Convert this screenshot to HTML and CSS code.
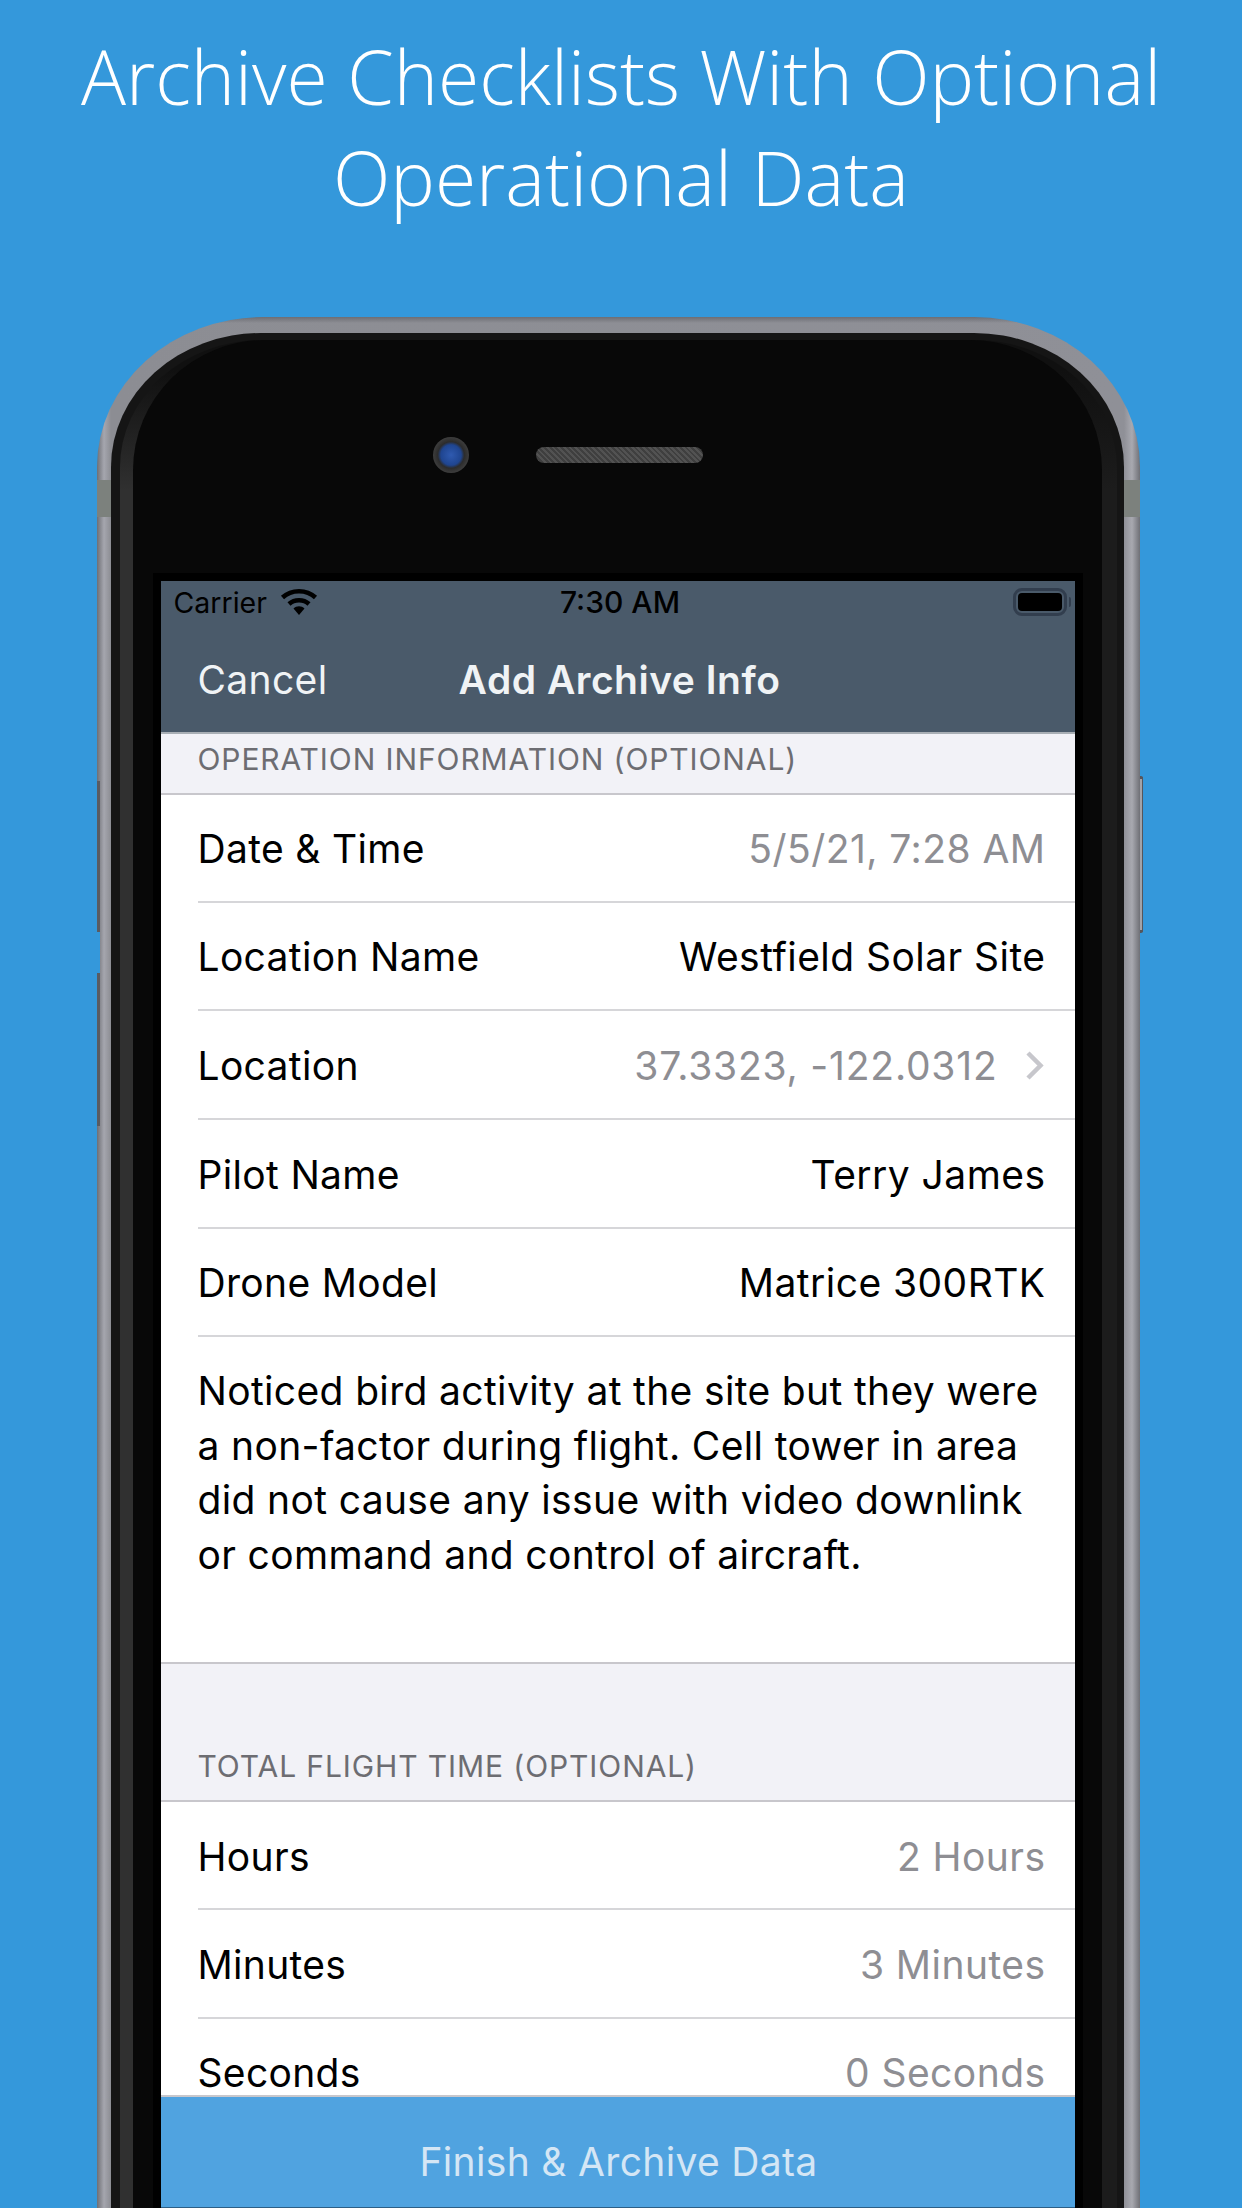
FILE: index.html
```html
<!DOCTYPE html>
<html lang="en">
<head>
  <meta charset="UTF-8">
  <title>Archive Checklists</title>
  <link rel="stylesheet" href="styles.css">
</head>
<body>
  <h1 class="headline">Archive Checklists With Optional<br>Operational Data</h1>

  <div class="phone">
    <span class="vol vol-up"></span>
    <span class="vol vol-down"></span>
    <span class="notch"></span>
    <span class="power-btn"></span>
    <span class="antenna antenna-left"></span>
    <span class="antenna antenna-right"></span>
    <div class="rim">
      <div class="band">
        <div class="face">
          <div class="sensors">
            <span class="camera"></span>
            <span class="speaker"></span>
          </div>
          <div class="screen">
            <div class="topbar">
              <div class="status">
                <div class="status-left">
                  <span>Carrier</span>
                  <svg class="wifi" viewBox="0 0 38 28" width="38" height="28">
                    <path d="M2.5 9.5C11.5 1 26.500 1 35.500 9.500" fill="none" stroke="#000" stroke-width="4.500"/>
                    <path d="M9 16C14.500 11 23.500 11 29 16" fill="none" stroke="#000" stroke-width="4.500"/>
                    <path d="M13.500 20.500C16.500 17.500 21.500 17.500 24.500 20.500L19 27Z" fill="#000"/>
                  </svg>
                </div>
                <span class="status-time">7:30 AM</span>
                <div class="battery"><span class="battery-fill"></span></div>
              </div>
              <div class="nav">
                <span class="nav-cancel">Cancel</span>
                <span class="nav-title">Add Archive Info</span>
                <span></span>
              </div>
            </div>

            <div class="list">
              <div class="section-head">OPERATION INFORMATION (OPTIONAL)</div>
              <div class="group">
                <div class="row"><span>Date &amp; Time</span><span class="val muted">5/5/21, 7:28 AM</span></div>
                <div class="row"><span>Location Name</span><span class="val">Westfield Solar Site</span></div>
                <div class="row">
                  <span>Location</span>
                  <span class="val muted with-chevron">37.3323, -122.0312
                    <svg class="chevron" viewBox="0 0 19 31" width="19" height="31"><path d="M3 3L15.500 15.500L3 28" fill="none" stroke="#c7c7cc" stroke-width="4.500"/></svg>
                  </span>
                </div>
                <div class="row"><span>Pilot Name</span><span class="val">Terry James</span></div>
                <div class="row"><span>Drone Model</span><span class="val">Matrice 300RTK</span></div>
                <p class="notes">Noticed bird activity at the site but they were<br>a non-factor during flight. Cell tower in area<br>did not cause any issue with video downlink<br>or command and control of aircraft.</p>
              </div>

              <div class="section-head section-tall">TOTAL FLIGHT TIME (OPTIONAL)</div>
              <div class="group">
                <div class="row"><span>Hours</span><span class="val muted">2 Hours</span></div>
                <div class="row"><span>Minutes</span><span class="val muted">3 Minutes</span></div>
                <div class="row"><span>Seconds</span><span class="val muted">0 Seconds</span></div>
              </div>
            </div>

            <div class="finish">Finish &amp; Archive Data</div>
          </div>
        </div>
      </div>
    </div>
  </div>
</body>
</html>
```

FILE: styles.css
```css
html,body{
  width: 1242px;
  height: 2208px;
  margin: 0;
  padding: 0;
  overflow: hidden;
}
body{
  background: #3498db;
  display: flex;
  flex-direction: column;
  font-family: Inter, "Liberation Sans", sans-serif;
}
.headline{
  margin: 0;
  height: 317px;
  flex-shrink: 0;
  padding-top: 26px;
  box-sizing: border-box;
  text-align: center;
  color: #fff;
  font-family: "Open Sans", sans-serif;
  font-weight: 340;
  font-size: 75px;
  line-height: 101px;
}

/* phone body */
.phone{
  position: relative;
  flex: 1;
  min-height: 0;
  display: flex;
  width: 1043px;
  margin-left: 97px;
  box-sizing: border-box;
  padding: 16px 16px 0 14px;
  border-radius: 166px 166px 0 0 / 150px 150px 0 0;
  background:
    linear-gradient(180deg, #6d6e74 0, rgba(109,110,116,0) 6px),
    linear-gradient(90deg, #6e6f75 0, #a5a6ae 7px, #8c8d93 14px, #8f9097 calc(100% - 16px), #a8a9b0 calc(100% - 8px), #6f7076 100%);
}
.vol{
  position: absolute;
  left: 0;
  width: 3px;
  background: #5a5b61;
}
.vol-up{top: 464px; height: 151px;}
.vol-down{top: 656px; height: 153px;}
.notch{
  position: absolute;
  left: 0;
  top: 615px;
  width: 3px;
  height: 41px;
  background: #3498db;
}
.power-btn{
  position: absolute;
  right: -3px;
  top: 459px;
  width: 3px;
  height: 157px;
  box-sizing: border-box;
  background: #a2a3a9;
  border: solid #55565c;
  border-width: 3px 1px 3px 0;
  border-radius: 0 2px 2px 0;
}
.antenna{
  position: absolute;
  top: 163px;
  width: 14px;
  height: 37px;
  background: #7c817d;
}
.antenna-left{left: 0;}
.antenna-right{right: 0; width: 16px;}
.rim{
  flex: 1;
  min-height: 0;
  display: flex;
  padding: 7px 7px 0 9px;
  background: #151515;
  border-radius: 150px 150px 0 0 / 134px 134px 0 0;
}
.band{
  flex: 1;
  min-height: 0;
  display: flex;
  padding: 0 15px 0 13px;
  background:
    linear-gradient(180deg, #101010 0, #101010 30px, rgba(16,16,16,0) 150px),
    linear-gradient(90deg, #303030 0, #303030 30px, #1c1c1c calc(100% - 30px));
  border-radius: 142px 142px 0 0 / 127px 127px 0 0;
}
.face{
  flex: 1;
  min-height: 0;
  display: flex;
  flex-direction: column;
  align-items: center;
  background: #080808;
  border-radius: 132px 132px 0 0 / 130px 130px 0 0;
}
.sensors{
  width: 100%;
  box-sizing: border-box;
  padding-left: 3px;
  display: grid;
  grid-template-columns: 1fr 167px 1fr;
  grid-template-rows: 16px;
  align-items: center;
  margin-top: 107px;
  flex-shrink: 0;
}
.camera{
  justify-self: end;
  width: 36px;
  height: 36px;
  margin-right: 67px;
  border-radius: 50%;
  background: radial-gradient(circle, #2f5ab0 0, #1f4590 40%, #2c2c2c 52%, #4a4a4a 85%, #1a1a1a 100%);
}
.speaker{
  grid-column: 2;
  height: 16px;
  border-radius: 8px;
  background: repeating-linear-gradient(45deg, #3f3f3f 0, #3f3f3f 2px, #525252 2px, #525252 4px);
}

/* screen */
.screen{
  width: 914px;
  flex: 1;
  min-height: 0;
  margin-top: 118px;
  display: flex;
  flex-direction: column;
  background: #fff;
  outline: 8px solid #000;
  overflow: hidden;
}
.topbar{
  height: 153px;
  flex-shrink: 0;
  background: #4a5a6a;
  box-sizing: border-box;
  border-bottom: 2px solid #a9afb5;
}
.status{
  height: 42px;
  display: grid;
  grid-template-columns: 1fr auto 1fr;
  align-items: center;
  padding: 0 8px 0 13px;
  color: #000;
  font-size: 28.5px;
}
.status-left{
  display: flex;
  align-items: center;
  gap: 13px;
}
.status-time{
  font-size: 30px;
  font-weight: 500;
}
.battery{
  position: relative;
  justify-self: end;
  width: 54px;
  height: 28px;
  box-sizing: border-box;
  padding: 2px;
  border: 3px solid #323e4e;
  border-radius: 9px;
  display: flex;
}
.battery::after{
  content: "";
  position: absolute;
  right: -7px;
  top: 6px;
  width: 2px;
  height: 10px;
  background: #323e4e;
  border-radius: 0 2px 2px 0;
}
.battery-fill{
  flex: 1;
  background: #000;
  border-radius: 4px;
}
.nav{
  height: 109px;
  box-sizing: border-box;
  padding: 4px 37px 0;
  display: grid;
  grid-template-columns: 1fr auto 1fr;
  align-items: center;
  color: #f0f3f5;
  font-size: 39px;
  letter-spacing: .35px;
}
.nav-title{
  margin-left: 4px;
  font-weight: 600;
  letter-spacing: .5px;
}
.list{
  flex: 1;
  min-height: 0;
  overflow: hidden;
  background: #f2f2f7;
}
.section-head{
  height: 61px;
  box-sizing: border-box;
  padding: 8px 37px 0;
  color: #6d6d72;
  font-size: 30px;
  letter-spacing: .9px;
  line-height: 34px;
  border-bottom: 2px solid #c8c7cc;
}
.section-tall{
  height: 138px;
  padding-top: 85px;
}
.group{
  background: #fff;
}
.row{
  height: 108.67px;
  box-sizing: border-box;
  margin-left: 37px;
  padding: 2px 29px 0 0;
  display: flex;
  justify-content: space-between;
  align-items: center;
  border-bottom: 2px solid #d6d6d9;
  color: #000;
  font-size: 39px;
  letter-spacing: .33px;
}
.row:first-child{
  height: 107.67px;
}
.val{
  letter-spacing: .45px;
}
.muted{
  color: #8e8e93;
}
.with-chevron{
  display: flex;
  align-items: center;
  gap: 27px;
  letter-spacing: .8px;
}
.chevron{
  margin-right: 2px;
}
.notes{
  margin: 0;
  height: 327px;
  box-sizing: border-box;
  padding: 27px 29px 0 37px;
  color: #000;
  font-size: 39px;
  letter-spacing: .35px;
  line-height: 54.500px;
  border-bottom: 2px solid #c8c7cc;
}
.finish{
  height: 113px;
  flex-shrink: 0;
  box-sizing: border-box;
  padding: 41px 0 0 2px;
  text-align: center;
  background: #50a3e0;
  border-top: 2px solid #c8c7cc;
  border-bottom: 1px solid #2b5f87;
  color: #d4e6f5;
  font-size: 39px;
  letter-spacing: .33px;
}
```
